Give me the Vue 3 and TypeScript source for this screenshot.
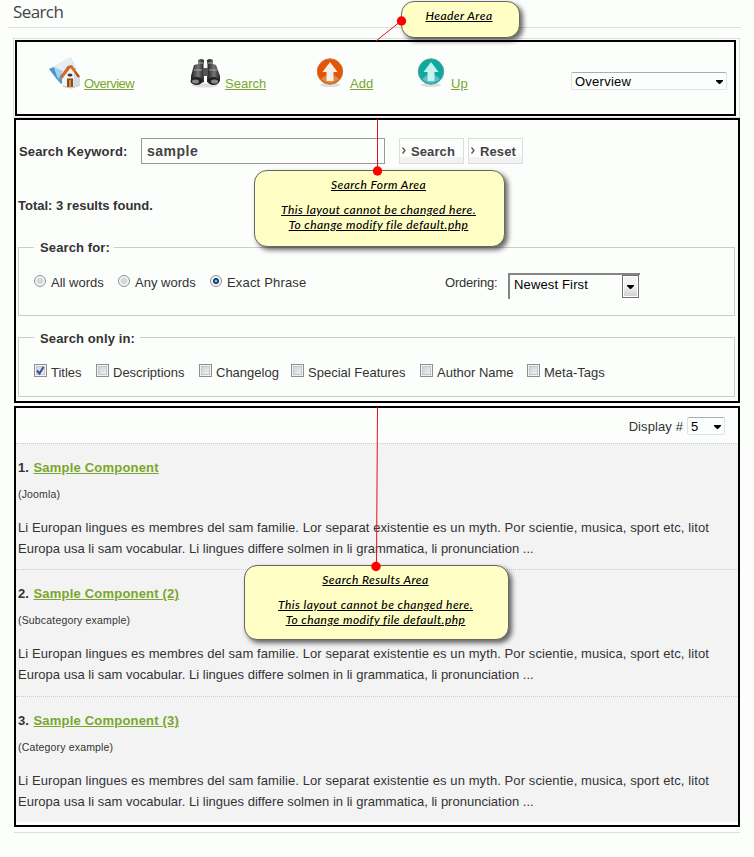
<script setup lang="ts">
interface Choice { label: string; on?: boolean; cls: string }
interface Result { id: number; title: string; note: string; cls: string }

const modes: Choice[] = [
  { label: 'All words', cls: 'w-all' },
  { label: 'Any words', cls: 'w-any' },
  { label: 'Exact Phrase', on: true, cls: 'w-exact' },
]
const scopes: Choice[] = [
  { label: 'Titles', on: true, cls: 's-titles' },
  { label: 'Descriptions', cls: 's-desc' },
  { label: 'Changelog', cls: 's-change' },
  { label: 'Special Features', cls: 's-special' },
  { label: 'Author Name', cls: 's-author' },
  { label: 'Meta-Tags', cls: 's-meta' },
]
const results: Result[] = [
  { id: 1, title: 'Sample Component', note: '(Joomla)', cls: 'first' },
  { id: 2, title: 'Sample Component (2)', note: '(Subcategory example)', cls: 'second' },
  { id: 3, title: 'Sample Component (3)', note: '(Category example)', cls: 'third' },
]
</script>

<template>
  <main class="page">
    <h1>Search</h1>

    <div class="header-wrap">
      <nav class="header-area">
        <a class="tool overview">
          <svg width="32" height="34" viewBox="0 0 32 34">
            <defs>
              <linearGradient id="sheet" x1="0" y1="0" x2="0.6" y2="1">
                <stop offset="0" stop-color="#eef5f9" /><stop offset=".45" stop-color="#cfe3f0" /><stop offset=".6" stop-color="#7fb8de" /><stop offset="1" stop-color="#2f86c4" />
              </linearGradient>
              <linearGradient id="roof" x1="0" y1="0" x2="1" y2="1">
                <stop offset="0" stop-color="#b9501c" /><stop offset=".5" stop-color="#d8702e" /><stop offset="1" stop-color="#8f3208" />
              </linearGradient>
            </defs>
            <path d="M0 13 4 11 22 1 27 13 12 28Z" fill="url(#sheet)" />
            <path d="M5 10 21 1 27 12 11 18Z" fill="#e5eef3" />
            <path d="M0 13 10 26 5 11Z" fill="#4b99c9" />
            <path d="M5 11 9 23 14 15Z" fill="#a6d1eb" />
            <path d="M13 20 21 10 31 21V28L22 31.500 13 30Z" fill="#f3f3f3" />
            <path d="M24 31 31 28V21L25 17Z" fill="#d9dcdf" />
            <path d="M11 21 18.500 10 23 9 31 20.500 29 21.500 21.500 12 13.500 22.500Z" fill="url(#roof)" />
            <path d="M14 30.500 23 32 31 29" fill="none" stroke="#bcbcbc" />
            <rect x="18" y="22.500" width="6" height="8.500" fill="#8b4d22" />
            <rect x="20" y="24" width="2" height="7" fill="#c98b50" />
            <ellipse cx="21" cy="19" rx="2.500" ry="1.500" fill="#3d3a38" />
          </svg>
          <span>Overview</span>
        </a>
        <a class="tool search">
          <svg width="31" height="34" viewBox="0 0 31 34">
            <defs>
              <linearGradient id="barrel" x1="0" x2="1"><stop offset="0" stop-color="#1d1d1d" /><stop offset=".55" stop-color="#777" /><stop offset="1" stop-color="#222" /></linearGradient>
            </defs>
            <ellipse cx="15" cy="29.500" rx="13" ry="2" fill="#ddd" />
            <path d="M8 4Q11 2 14 4L13.500 9 14 26 8 28 1 25V20L4 9 8 8Z" fill="url(#barrel)" />
            <path d="M17 4Q20 2 23 4V8L26 9 30 20V25L23 28 17 26 17.500 9Z" fill="url(#barrel)" />
            <path d="M13 12H18V20H13Z" fill="#555" />
            <path d="M8 7H13M18 7H23M4 14H12M19 14H27" stroke="#aaa" stroke-width="1" />
            <ellipse cx="6.500" cy="25" rx="6" ry="4" fill="#222" /><ellipse cx="23.500" cy="25" rx="6" ry="4" fill="#222" />
            <ellipse cx="5.500" cy="25.500" rx="3.500" ry="2" fill="#888" /><ellipse cx="24.500" cy="25.500" rx="3.500" ry="2" fill="#888" />
          </svg>
          <span>Search</span>
        </a>
        <a class="tool add">
          <svg width="28" height="32" viewBox="0 0 28 32">
            <ellipse cx="14" cy="29" rx="10" ry="2" fill="#ddd" />
            <circle cx="14" cy="15.500" r="12.700" fill="#e65304" stroke="#c87544" />
            <path d="M5 23Q14 14 23 23 14 31 5 23" fill="#d98d43" />
            <path d="M14 6 21.500 16H17.500V25H10.500V16H6.500Z" fill="#f2eeea" />
          </svg>
          <span>Add</span>
        </a>
        <a class="tool up">
          <svg width="28" height="32" viewBox="0 0 28 32">
            <ellipse cx="14" cy="29" rx="10" ry="2" fill="#ddd" />
            <circle cx="14" cy="15.500" r="12.700" fill="#0ea99c" stroke="#4caaa0" />
            <path d="M5 23Q14 14 23 23 14 31 5 23" fill="#65b9cc" />
            <path d="M14 6 21.500 16H17.500V25H10.500V16H6.500Z" fill="#c7f3ef" />
          </svg>
          <span>Up</span>
        </a>
        <div class="select view"><span>Overview</span><svg width="7" height="4" viewBox="0 0 7 4"><path d="M0 0H7V1L4 4H3L0 1Z" /></svg></div>
      </nav>
    </div>

    <section class="form-area">
      <div class="keyword-row">
        <label>Search Keyword:</label>
        <div class="input"><span>sample</span></div>
        <button class="b-search"><svg width="4" height="7" viewBox="0 0 4 7"><path d="M.5.500 3 3.500.500 6.500" /></svg><span>Search</span></button>
        <button class="b-reset"><svg width="4" height="7" viewBox="0 0 4 7"><path d="M.5.500 3 3.500.500 6.500" /></svg><span>Reset</span></button>
      </div>
      <p class="total">Total: 3 results found.</p>
      <div class="group modes">
        <h2 class="for"><span>Search for:</span></h2>
        <div class="options">
          <div v-for="m in modes" :key="m.label" class="option" :class="m.cls">
            <i class="radio" :class="{ on: m.on }"></i><span>{{ m.label }}</span>
          </div>
          <span class="ordering">Ordering:</span>
          <div class="order-select">
            <span>Newest First</span>
            <div class="drop"><svg width="7" height="4" viewBox="0 0 7 4"><path d="M0 0H7V1L4 4H3L0 1Z" /></svg></div>
          </div>
        </div>
      </div>
      <div class="group scopes">
        <h2 class="only"><span>Search only in:</span></h2>
        <div class="options">
          <div v-for="s in scopes" :key="s.label" class="option" :class="s.cls">
            <i class="check"><svg v-if="s.on" width="9" height="9" viewBox="0 0 9 9"><path d="M1 4.500 3.500 7.500 7.500 1" /></svg></i><span>{{ s.label }}</span>
          </div>
        </div>
      </div>
    </section>

    <section class="results-area">
      <div class="display-row">
        <span class="display">Display #</span>
        <div class="select count"><span>5</span><svg width="7" height="4" viewBox="0 0 7 4"><path d="M0 0H7V1L4 4H3L0 1Z" /></svg></div>
      </div>
      <article v-for="r in results" :key="r.id" :class="r.cls">
        <h3><b>{{ r.id }}.</b><a>{{ r.title }}</a></h3>
        <p class="note">{{ r.note }}</p>
        <p class="text"><span class="l1">Li Europan lingues es membres del sam familie. Lor separat existentie es un myth. Por scientie, musica, sport etc, litot</span><br><span class="l2">Europa usa li sam vocabular. Li lingues differe solmen in li grammatica, li pronunciation ...</span></p>
      </article>
    </section>
    <hr class="end">

    <aside class="callout c-header"><p>Header Area</p></aside>
    <aside class="callout c-form"><p>Search Form Area</p><p class="more">This layout cannot be changed here.<br>To change modify file default.php</p></aside>
    <aside class="callout c-results"><p>Search Results Area</p><p class="more">This layout cannot be changed here.<br>To change modify file default.php</p></aside>
    <svg class="connectors" width="754" height="857" viewBox="0 0 754 857">
      <path d="M401 21 376 41M377.500 119V171M377.500 407 376.500 566" />
      <circle cx="401.500" cy="21" r="4.700" /><circle cx="377.500" cy="171" r="4.700" /><circle cx="376" cy="566.500" r="4.700" />
    </svg>
  </main>
</template>

<style>
body { background: #fcfffc; }
</style>

<style scoped>
* { box-sizing: border-box; margin: 0; }
.page { position: relative; width: 754px; height: 857px; overflow: hidden; background: #fcfefc; color: #333; font: 13px/16px "Liberation Sans", Arial, sans-serif; padding-right: 14px; white-space: nowrap; }
h1 { height: 28px; margin: 0 -1px 10px 8px; padding: 0 0 0 5px; border-bottom: 1px solid #ddd; font: 500 17px/24px "Open Sans", sans-serif; color: #444; letter-spacing: -.6px; }
.header-wrap { height: 80px; margin-left: 13px; border: 1px solid #ddd; padding: 1px 3px 1px 1px; }
.header-area { height: 76px; border: 2px solid #000; display: flex; align-items: flex-start; padding: 14px 0 0 32px; }
.tool { display: flex; color: #7aa62e; }
.tool span { text-decoration: underline; line-height: 16px; }
.overview { width: 141px; }
.overview span { margin: 20px 0 0 3px; letter-spacing: -.5px; }
.search { width: 126px; }
.search span { margin: 20px 0 0 4px; }
.add { width: 101px; }
.add span, .up span { margin: 20px 0 0 6px; }
.up { width: 154px; }
.select { display: flex; align-items: center; justify-content: space-between; border: 1px solid #dde1e8; border-top-color: #aaadb3; border-radius: 2px; background: #fcfefc; color: #000; padding: 1px 3px 0; height: 18px; }
.select span { padding-top: 1px; }
.view { width: 156px; margin-top: 16px; }
.view span { letter-spacing: .25px; }
.select svg, .drop svg { fill: #000; flex: none; }
.form-area { height: 285px; margin-left: 14px; border: 2px solid #000; padding: 18px 3px 0 2px; }
.keyword-row { display: flex; height: 26px; align-items: center; font-weight: bold; }
.keyword-row label { width: 123px; padding: 2px 0 0 1px; letter-spacing: .15px; }
.input { width: 244px; height: 26px; border: 1px solid #999; padding: 4px 5px; margin-right: 14px; background: #fcfefc; font-size: 14px; color: #444; letter-spacing: .5px; }
button { height: 26px; border: 1px solid #ddd; padding: 0 0 0 3px; background: linear-gradient(#fcfefc 75%, #f2f2f4 75%); color: #444; font: bold 13px/24px "Liberation Sans", Arial, sans-serif; display: flex; align-items: center; gap: 4px; }
button span { padding-top: 1px; }
button svg { fill: none; stroke: #555; stroke-width: 1.3; margin-bottom: 2px; }
.b-search { width: 65px; margin-right: 4px; }
.b-search, .b-reset { padding-left: 2px; gap: 5px; letter-spacing: .1px; }
.b-reset { width: 55px; }
.total { font-weight: bold; margin-top: 34px; height: 49px; }
.group { border: 1px solid #ccc; width: 717px; }
.modes { height: 69px; }
.scopes { height: 60px; margin-top: 21px; }
h2 { width: max-content; margin: -9px 0 0 15px; padding: 0 6px; height: 18px; background: #fcfefc; font: bold 13px/18px "Liberation Sans", Arial, sans-serif; letter-spacing: .12px; }
.scopes h2 { line-height: 20px; }
.for { width: 80px; }
.only { width: 106px; }
.options { display: flex; padding-left: 15px; height: 30px; }
.modes .options { margin-top: 16px; }
.scopes .options { margin-top: 16px; }
.option { display: flex; padding-top: 1px; }
.option span { padding-top: 1px; }
.modes .option span { padding-top: 1px; }
.w-exact span { letter-spacing: .17px; }
.radio { width: 12px; height: 12px; border: 1px solid #8e8f8f; border-radius: 50%; margin: 1px 5px 0 0; background: radial-gradient(circle, #d4d6da 0 35%, #fafafa 62%); }
.radio.on { background: radial-gradient(circle at 50% 50%, #65c5e8 0 10%, #17528b 24%, #18324f 38%, #f4f4f4 48%); }
.w-all { width: 84px; }
.w-any { width: 92px; }
.w-exact { width: 235px; }
.ordering { width: 63px; margin-top: 1px; padding-top: 1px; letter-spacing: -.2px; }
.order-select { width: 132px; height: 26px; border: solid #858585; border-width: 2px 0 0 2px; display: flex; justify-content: space-between; background: #fcfefc; color: #000; padding: 0 1px 0 4px; }
.order-select > span { padding-top: 2px; letter-spacing: .15px; }
.drop { width: 17px; height: 23px; border: 1px solid #707070; box-shadow: inset 0 0 0 1px #fff; background: linear-gradient(#f3f3f3 45%, #cfcfcf); display: flex; align-items: center; justify-content: center; }
.check { width: 13px; height: 13px; border: 1px solid #8e8f8f; margin: 0 4px 0 0; background: linear-gradient(135deg, #c9ccd3, #f5f5f5); box-shadow: inset 0 0 0 1px #f4f4f4, inset 0 0 0 2px #c2c6ce; display: flex; align-items: center; justify-content: center; }
.check svg { fill: none; stroke: #394b98; stroke-width: 2; }
.s-titles { width: 62px; }
.s-desc { width: 103px; }
.s-change { width: 92px; }
.s-special { width: 129px; }
.s-author { width: 107px; }
.results-area { height: 421px; margin: 3px 0 0 14px; border: 2px solid #000; background: #fff; }
.display-row { height: 35px; padding: 9px 13px 0 0; display: flex; justify-content: flex-end; background: #fcfefc; }
.display { padding-top: 2px; margin-right: 4px; letter-spacing: .1px; }
.count { width: 38px; }
article { border-top: 1px dotted #ccc; background: #f3f3f3; height: 126px; padding: 16px 0 0 2px; }
article.second { height: 127px; }
article.third { height: 126px; }
h3 { font: bold 13px/16px "Liberation Sans", Arial, sans-serif; display: flex; }
h3 b { width: 15.500px; }
h3 a { color: #7aa62e; text-decoration: underline; letter-spacing: .2px; }
.note { font-size: 10.500px; line-height: 14px; margin-top: 11px; letter-spacing: .17px; }
.text { line-height: 21.450px; margin-top: 16px; }
.l1 { letter-spacing: .092px; }
.l2 { letter-spacing: .015px; }
.end { border: 0; height: 1px; background: #ddd; margin: 5px 0 0 14px; }
.callout { position: absolute; border: 1.500px solid #666; border-radius: 13px; background: #ffffc5; box-shadow: 3px 3px 5px rgba(0,0,0,.6); color: #000; text-align: center; font: italic 500 12px/15px "Lato", sans-serif; text-decoration: underline; letter-spacing: .44px; }
.c-header { left: 401px; top: 1px; width: 119px; height: 37px; padding: 6px 3px 0 0; }
.c-form { left: 254px; top: 170px; width: 251px; height: 77px; padding: 6px 2px 0 0; }
.c-results { left: 244px; top: 565px; width: 265px; height: 75px; padding: 6px 2px 0 0; }
.more { margin-top: 10px; }
.connectors { position: absolute; left: 0; top: 0; fill: #f00; }
.connectors path { fill: none; stroke: #e01212; stroke-width: 1; }
</style>
